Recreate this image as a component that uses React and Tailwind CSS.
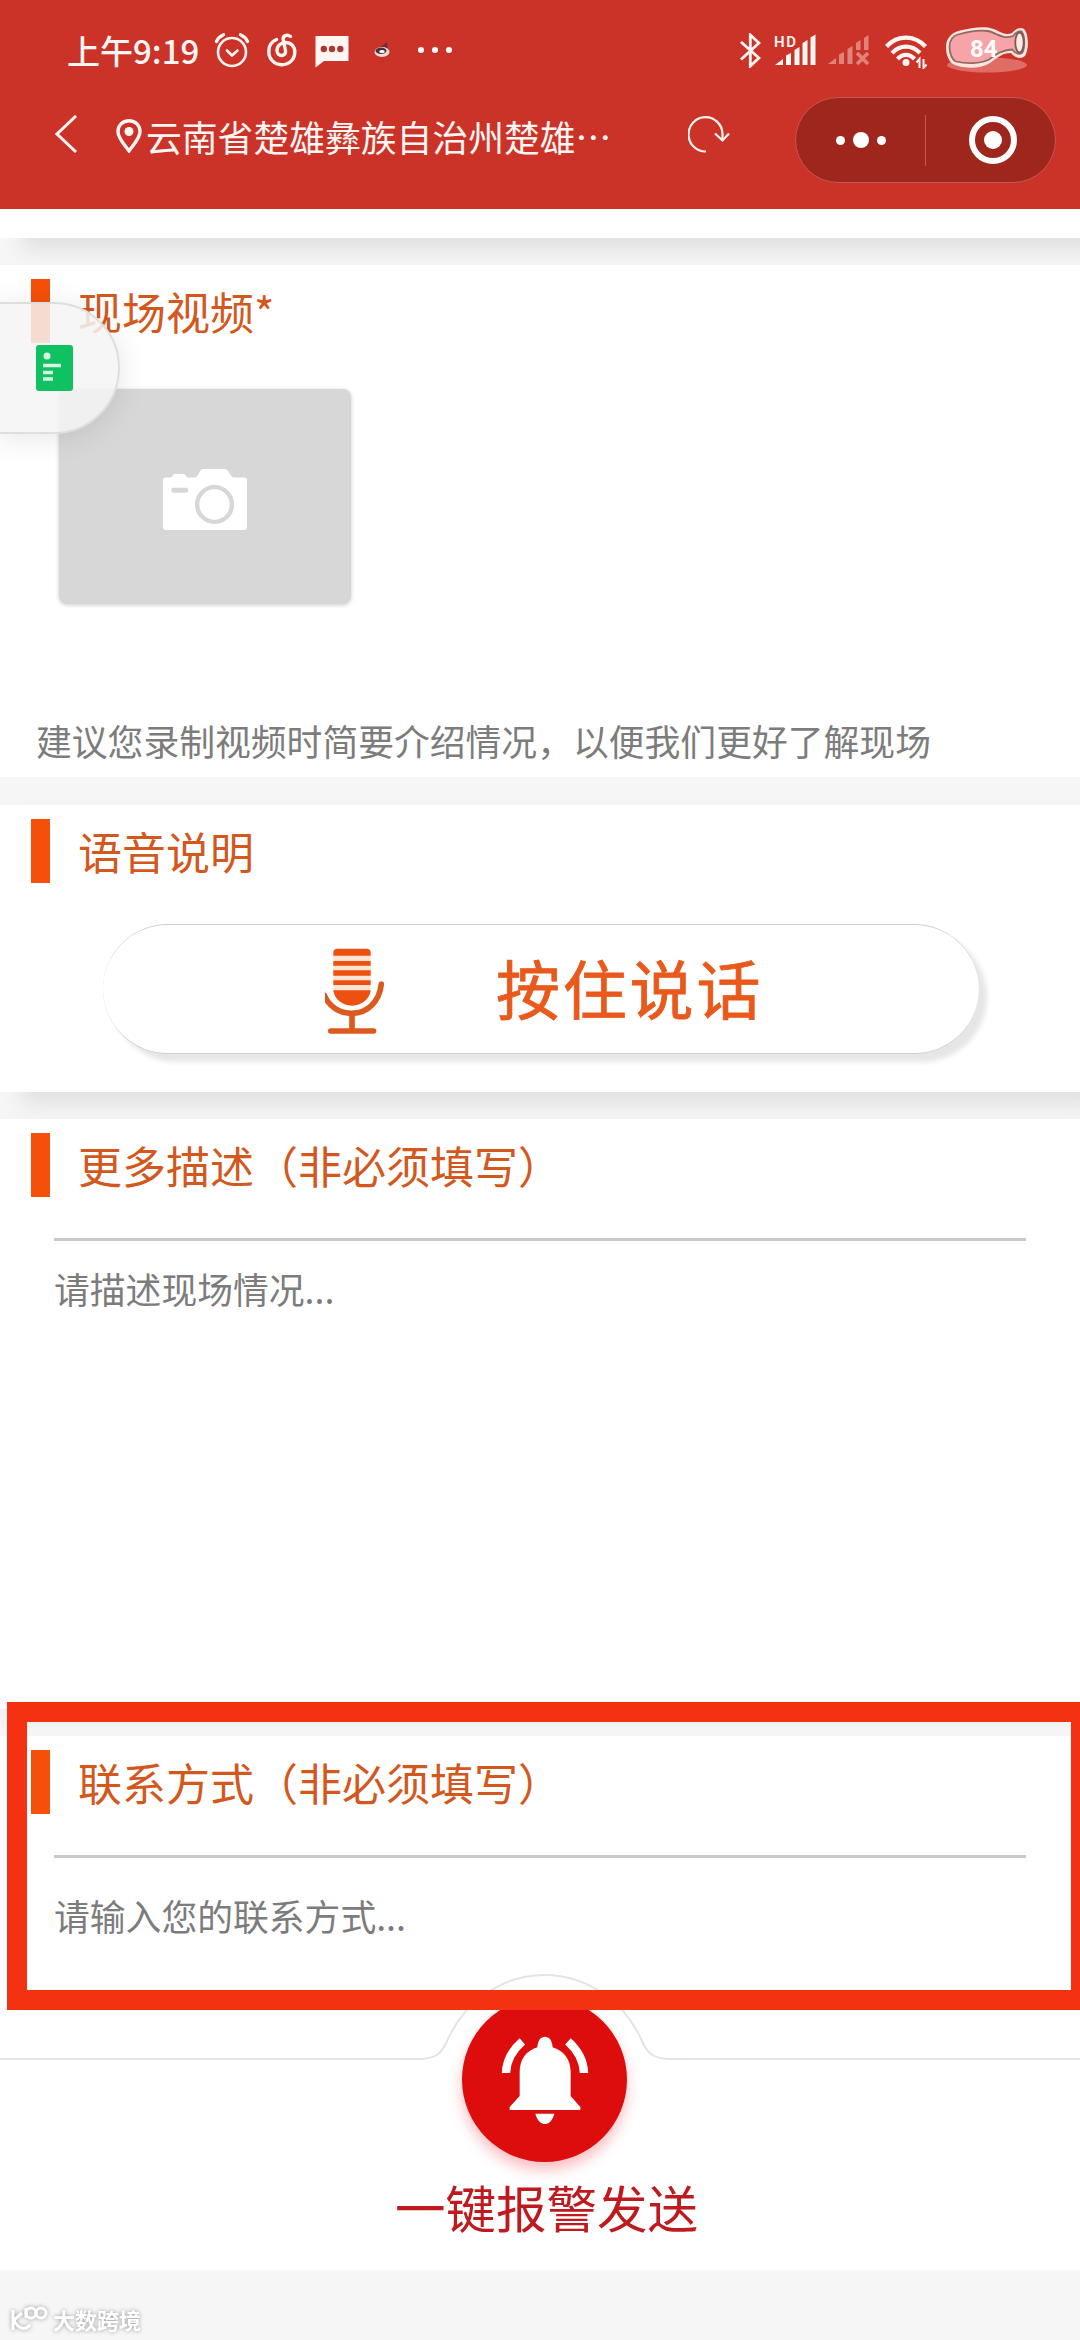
function AlarmIcon() {
  return (
    <svg className="w-9 h-9" viewBox="0 0 36 36" fill="none" stroke="currentColor" strokeWidth="2.6" strokeLinecap="round">
      <circle cx="18" cy="20" r="14" />
      <path d="M13 18.5l5 5 5.500-5" strokeLinejoin="round" />
      <path d="M2.500 9.500Q4.500 5 9.500 2.800M33.500 9.500Q31.500 5 26.500 2.800" strokeWidth="3.400" />
    </svg>
  );
}

function MusicIcon() {
  return (
    <svg className="w-[30px] h-[34px]" viewBox="0 0 30 34" fill="none" stroke="currentColor" strokeWidth="3.400" strokeLinecap="round">
      <path d="M9.500 6.500C4.500 8.500 1.800 13 1.800 18.500c0 7.500 5.500 13.200 13 13.200s13-5.300 13-12.700c0-5.500-4-9.500-9-9.500-5 0-8.800 3.500-8.800 8 0 3 2 5 4.500 5s4.500-2 4-5L16.200 6.500C15.700 3 20 .8 23.500 3.500" />
    </svg>
  );
}

function ChatIcon() {
  return (
    <svg className="w-[34px] h-8" viewBox="0 0 34 32">
      <path d="M.5 0h33v25H9L.500 31.500z" fill="currentColor" />
      <circle cx="8.800" cy="13" r="3.200" fill="#a8392f" />
      <circle cx="17" cy="13" r="3.200" fill="#a8392f" />
      <circle cx="25.300" cy="13" r="3.200" fill="#a8392f" />
    </svg>
  );
}

function CritterIcon() {
  return (
    <svg className="w-4 h-4" viewBox="0 0 16 16">
      <path d="M7 5l6-5 .5 7z" fill="#6b2b48" />
      <ellipse cx="8" cy="10" rx="7.500" ry="5" fill="#f6dcd6" />
      <ellipse cx="7" cy="8.800" rx="5.500" ry="3.200" fill="#4a3144" />
      <ellipse cx="8" cy="9.600" rx="2.800" ry="1.500" fill="#fff" />
    </svg>
  );
}

function BluetoothIcon() {
  return (
    <svg className="w-[21px] h-[35px]" viewBox="0 0 21 35" fill="none" stroke="currentColor" strokeWidth="2.800">
      <path d="M1 9l18 16-8.700 8V2l8.700 8L1 26.500" />
    </svg>
  );
}

function SignalIcon() {
  return (
    <svg className="w-[42px] h-8 overflow-visible" viewBox="0 0 42 32" fill="currentColor">
      <text x="0" y="12.500" fontSize="15" fontWeight="600" fontFamily="Roboto, sans-serif" textLength="22">HD</text>
      <path d="M1 31l8-6v6zM12 31V21.500l5-2.500v12zM20.500 31V16l5-3v18zM28.500 31V9l5-3v25zM36.500 31V3.500l5-3V31z" />
    </svg>
  );
}

function NoSignalIcon() {
  return (
    <svg className="w-[42px] h-[30px] text-[#e0837a]" viewBox="0 0 42 30" fill="currentColor">
      <path d="M0 29l8-6v6zM11 29V19.500l5-2.500v12zM19.500 29V14l5-3v18zM28 15V8l4.500-3v10zM36 15V3l4.500-3v15z" />
      <path d="M29 18l11 11M40 18L29 29" stroke="currentColor" strokeWidth="3.600" />
    </svg>
  );
}

function WifiIcon() {
  return (
    <svg className="w-[43px] h-[34px]" viewBox="0 0 43 34" fill="none" stroke="currentColor" strokeWidth="4.200">
      <path d="M1.500 11.500C12.500-.300 29.500-.300 40.500 11.500" />
      <path d="M7 18C15 9.500 27 9.500 35 18" />
      <path d="M12.500 24C17.500 18.500 24.500 18.500 29.500 24" />
      <circle cx="21" cy="27.500" r="3.500" fill="currentColor" stroke="none" />
      <path d="M34.500 33v-9l-3 3.500M38.500 24v9l3-3.500" strokeWidth="2" />
    </svg>
  );
}

function BatteryIcon() {
  return (
    <svg className="w-[86px] h-[50px]" viewBox="0 0 86 50">
      <ellipse cx="43" cy="40" rx="40" ry="7.500" fill="#e06c66" />
      <path
        d="M2 22C2 13 8 8 14 6C26 3 36 1.500 44 2.500C54 4 60 12 68 8C72 3 77 2 80 4C85 9 85 25 81 31C76 35 70 32 67 28C58 28 53 33 46 38C36 44 22 44 11 40C5 38 2 30 2 22Z"
        fill="#fce5dc"
      />
      <path
        d="M5.500 22C5.500 15 9 11 14 9.500C26 6 36 5 44 6C53 8 59 15 69 11C72 7 76 5 78 7C81 11 81 24 78 28C75 30 71 28 68 24.500C57 25 51 30 45 34.500C36 39 22 39 12 36.500C8 35 5.500 28 5.500 22Z"
        fill="#f6a4a8"
        stroke="#8f6a62"
        strokeWidth="1.800"
      />
      <ellipse cx="75.500" cy="17.500" rx="4.200" ry="10" fill="#fdeae2" stroke="#7a5a52" strokeWidth="1.800" />
      <text x="26" y="32" fontSize="24" fontWeight="700" fontFamily="Roboto, sans-serif" fill="#fff">84</text>
    </svg>
  );
}

function PinIcon() {
  return (
    <svg className="w-[26px] h-[34px]" viewBox="0 0 26 34">
      <path d="M13 1.800C6.500 1.800 2 6.500 2 12.500C2 20 10 27 13 32C16 27 24 20 24 12.500C24 6.500 19.500 1.800 13 1.800Z" fill="none" stroke="currentColor" strokeWidth="3.400" />
      <circle cx="13" cy="12.500" r="4.500" fill="currentColor" />
    </svg>
  );
}

function RefreshIcon() {
  return (
    <svg className="w-[42px] h-[37px]" viewBox="0 0 42 37" fill="none" stroke="currentColor" strokeWidth="2.200">
      <path d="M18 35.500A17 17.200 0 1 1 34.500 18V24" />
      <path d="M27 17.500l7.500 7 6.500-7" />
    </svg>
  );
}

function CameraIcon() {
  return (
    <svg className="w-[84px] h-[61px]" viewBox="0 0 251 182">
      <path d="M8 25H24C29 25 29 15 35 15H62C68 15 68 25 74 25H96C106 25 108 0 120 0H184C198 0 200 25 212 25H243Q251 25 251 33V174Q251 182 243 182H8Q0 182 0 174V33Q0 25 8 25Z" fill="#fff" />
      <rect x="25" y="56" width="50" height="15" rx="6" fill="#d7d7d7" />
      <circle cx="154" cy="106" r="52" fill="none" stroke="#d7d7d7" strokeWidth="13" />
    </svg>
  );
}

function MicIcon() {
  return (
    <svg className="w-[60px] h-[87px]" viewBox="0 0 180 261">
      <rect x="25" y="14" width="112" height="124" fill="#fde3d3" />
      <path d="M25 23V14Q25 2 37 2H125Q137 2 137 14V23ZM25 39H137V53H25ZM25 67H137V83H25ZM25 97H137V111H25ZM25 127H137C134 154 110 173 81 173S28 154 25 127Z" fill="#ee500f" />
      <path d="M-2 142C12 176 44 196 81 196C128 196 163 161 169 108" fill="none" stroke="#dc5a1e" strokeWidth="17" strokeLinecap="round" />
      <path d="M81 198V250" stroke="#dc5a1e" strokeWidth="17" />
      <path d="M17 249H146" stroke="#dc5a1e" strokeWidth="16" strokeLinecap="round" />
    </svg>
  );
}

function BellIcon() {
  return (
    <svg className="w-[90px] h-[92px]" viewBox="360 250 270 276">
      <path d="M389 478V469L419 436V365C419 325 440 300 472 290C474 268 482 258 495 258C508 258 516 268 518 290C550 300 572 325 572 365V436L601 469V478ZM466 489H523C518 508 508 520 495 520C482 520 471 508 466 489Z" fill="#fff" />
      <path d="M378 367C379 330 395 300 427 272M612 367C611 330 595 300 564 272" fill="none" stroke="#fff" strokeWidth="25" />
    </svg>
  );
}

function SectionTitle({ children }) {
  return (
    <div className="flex items-center h-16 pl-[31px]">
      <span className="w-[19px] h-16 bg-[#f4500a]" />
      <h2 className="ml-[28px] text-[44px] leading-[60px] text-[#d3581d]">{children}</h2>
    </div>
  );
}

function StatusBar() {
  return (
    <div className="flex items-center h-[100px] pl-[67px] pr-[50px]">
      <span className="w-[130px] text-[33px] leading-none font-medium whitespace-nowrap">上午9:19</span>
      <div className="flex items-center ml-[17px]">
        <AlarmIcon />
        <div className="ml-[17px]"><MusicIcon /></div>
        <div className="ml-[18px] mt-1"><ChatIcon /></div>
        <div className="ml-[25px]"><CritterIcon /></div>
        <div className="flex gap-2 ml-[28px]">
          <i className="w-1.5 h-1.5 rounded-full bg-white" />
          <i className="w-1.5 h-1.5 rounded-full bg-white" />
          <i className="w-1.5 h-1.5 rounded-full bg-white" />
        </div>
      </div>
      <div className="flex items-center ml-auto">
        <BluetoothIcon />
        <div className="ml-[13px]"><SignalIcon /></div>
        <div className="ml-[12px]"><NoSignalIcon /></div>
        <div className="ml-[15px] mt-1"><WifiIcon /></div>
        <div className="ml-[16px]"><BatteryIcon /></div>
      </div>
    </div>
  );
}

function NavBar() {
  return (
    <div className="flex items-center h-[80px] pl-[54px] pr-[24px]">
      <svg className="w-6 h-[38px] -mt-3" viewBox="0 0 24 38" fill="none" stroke="currentColor" strokeWidth="3">
        <path d="M22 1L3 19l19 18" />
      </svg>
      <div className="ml-[38px] -mt-2"><PinIcon /></div>
      <h1 className="ml-1 -mt-1.5 w-[466px] text-[35.800px] leading-none whitespace-nowrap">云南省楚雄彝族自治州楚雄⋯</h1>
      <div className="ml-[76px] -mt-3"><RefreshIcon /></div>
      <div className="flex items-center ml-auto w-[261px] h-[86px] rounded-full bg-[#9f261d] border border-[#c5584f]">
        <div className="flex-1 flex items-center justify-center gap-2">
          <i className="w-[9px] h-[9px] rounded-full bg-white" />
          <i className="w-4 h-4 rounded-full bg-white" />
          <i className="w-[9px] h-[9px] rounded-full bg-white" />
        </div>
        <span className="w-px h-[51px] bg-[#c5584f]" />
        <div className="w-[129px] flex justify-center pl-[5px]">
          <span className="w-12 h-12 rounded-full border-[6px] border-white flex items-center justify-center">
            <i className="w-[18px] h-[18px] rounded-full bg-white" />
          </span>
        </div>
      </div>
    </div>
  );
}

export default function App() {
  return (
    <div className="relative flex flex-col w-[1080px] h-[2340px] overflow-hidden bg-[#f6f6f6] font-['Noto_Sans_CJK_SC',sans-serif]">
      <header className="relative z-10 h-[209px] shrink-0 bg-[#cb3329] text-[#fff5f2]">
        <StatusBar />
        <NavBar />
      </header>

      <div className="h-[29px] shrink-0 bg-white shadow-[22px_12px_20px_#e0e0e0]" />

      <section className="relative h-[512px] shrink-0 mt-[27px] pt-[14px] bg-white">
        <SectionTitle>现场视频*</SectionTitle>
        <div className="flex items-center justify-center w-[292px] h-[215px] mt-[46px] ml-[59px] pt-[5px] rounded-lg bg-[#d7d7d7] shadow-[0_1px_4px_#ccc]">
          <CameraIcon />
        </div>
        <p className="mt-[111px] ml-9 text-[35.800px] leading-[50px] text-[#7c7c7c]">建议您录制视频时简要介绍情况，以便我们更好了解现场</p>

        {/* floating shortcut */}
        <button className="absolute left-[-2px] top-[37px] w-[122px] h-[132px] rounded-r-full border-2 border-[#dedede] bg-[#f5f5f5]/85 shadow-[0_4px_30px_rgba(0,0,0,0.1)]">
          <svg className="ml-[36px] w-[37px] h-[46px]" viewBox="0 0 37 46">
            <rect width="37" height="46" rx="3" fill="#0fc160" />
            <circle cx="11" cy="11" r="3.500" fill="#d8f8e4" />
            <path d="M7 20.500H25M7 27.500H17M7 34H17" stroke="#d8f8e4" strokeWidth="3.600" />
          </svg>
        </button>
      </section>

      <section className="h-[287px] shrink-0 mt-[28px] pt-[14px] bg-white shadow-[22px_12px_20px_#e0e0e0]">
        <SectionTitle>语音说明</SectionTitle>
        <button className="flex items-center w-[876px] h-[130px] mt-[41px] ml-[103px] pl-[222px] rounded-full bg-white border-y border-[#cfcfcf] shadow-[8px_8px_5px_#e6e6e6]">
          <div className="mt-[5px]"><MicIcon /></div>
          <span className="ml-[111px] -mt-1.5 text-[64px] leading-none tracking-[2.800px] text-[#e8591b] [-webkit-text-stroke:0.8px_#e8591b]">按住说话</span>
        </button>
      </section>

      <section className="relative h-[590px] shrink-0 mt-[27px] pt-[14px] bg-white shadow-[0_10px_20px_#ececec]">
        <SectionTitle>更多描述（非必须填写）</SectionTitle>
        <div className="mx-[54px] mt-[41px] border-t-[3px] border-[#c9c9c9]">
          <p className="mt-[22px] text-[35.800px] leading-[50px] text-[#7c7c7c]">请描述现场情况...</p>
        </div>
      </section>

      <section className="relative h-[238px] shrink-0 mt-[27px] pt-[14px] bg-white">
        <SectionTitle>联系方式（非必须填写）</SectionTitle>
        <div className="mx-[54px] mt-[41px] border-t-[3px] border-[#c9c9c9]">
          <p className="mt-[32px] text-[35.800px] leading-[50px] text-[#7c7c7c]">请输入您的联系方式...</p>
        </div>
        <div className="absolute z-20 left-[7px] right-[-11px] -top-[34px] h-[308px] border-[20px] border-[#f43111]" />
      </section>

      <footer className="relative h-[296px] shrink-0 bg-white">
        <div className="flex items-end h-[86px]">
          <span className="w-[400px] h-[2px] bg-[#e6e6e6]" />
          <svg className="w-[289px] h-[86px]" viewBox="0 0 289 86" fill="none" stroke="#e4e4e4" strokeWidth="2">
            <path d="M0 85H18C36 85 42 79 47 67C64 28 102 1 144.500 1C187 1 225 28 242 67C247 79 253 85 271 85H289" />
          </svg>
          <span className="flex-1 h-[2px] bg-[#e6e6e6]" />
        </div>
        <button className="absolute left-[462px] top-[23px] flex items-center justify-center w-[165px] h-[165px] rounded-full bg-[#de0d0d] shadow-[0_8px_14px_rgba(240,40,50,0.3)]">
          <BellIcon />
        </button>
        <p className="mt-[111px] pl-[13px] text-center text-[50.500px] leading-[70px] text-[#bf1a1e]">一键报警发送</p>
      </footer>

      <div className="flex items-center h-[70px] pl-[10px] pt-[28px] text-white [filter:drop-shadow(0_0_2px_#999)]">
        <svg className="w-[38px] h-7" viewBox="0 0 38 28" fill="none" stroke="currentColor" strokeWidth="3">
          <path d="M3 5v20M12 8L4 15C7 22 14 27 20 20M16 3v10" />
          <circle cx="21" cy="8" r="5" />
          <circle cx="31" cy="8" r="5" />
        </svg>
        <span className="ml-[5px] text-[22px] leading-none font-bold">大数跨境</span>
      </div>
    </div>
  );
}
